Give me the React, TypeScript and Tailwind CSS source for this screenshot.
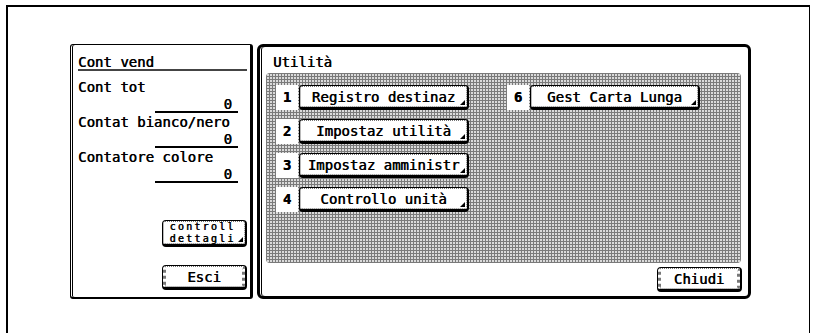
import React from "react";

const mono = { fontFamily: '"DejaVu Sans Mono", "Liberation Mono", monospace' };

function Corner() {
  return (
    <span className="absolute bottom-[2px] right-[2px] w-0 h-0 border-l-[5px] border-l-transparent border-b-[5px] border-b-black" />
  );
}

function MenuButton(props: { label: string; className?: string; arrow?: boolean; heavy?: boolean; children?: React.ReactNode }) {
  return (
    <div
      className={`relative bg-white border border-black border-b-[3px] border-r-[2px] rounded-[4px] ${props.className ?? ""}`}
    >
      <div
        className={`h-full border border-dotted border-[#777] rounded-[2px] flex items-center justify-center ${
          props.heavy ? "border-x-[3px]" : ""
        }`}
      >
        {props.children ?? <span className="text-[14px] leading-none">{props.label}</span>}
      </div>
      {props.arrow && <Corner />}
    </div>
  );
}

function Counter(props: { label: string; value: string }) {
  return (
    <div className="flex flex-col mb-[1px]">
      <div className="h-[17px] leading-[17px]">{props.label}</div>
      <div className="ml-[77px] w-[83px] h-[17px] leading-[16px] border-b-2 border-black text-right pr-[6px]">
        {props.value}
      </div>
    </div>
  );
}

function Row(props: { n: string; label: string }) {
  return (
    <div className="flex h-[25px]">
      <div className="w-[22px] h-[25px] bg-white flex items-center justify-center font-bold text-[14px]">{props.n}</div>
      <MenuButton label={props.label} arrow className="ml-[1px] w-[170px] h-[25px]" />
    </div>
  );
}

export default function App() {
  return (
    <div
      className="w-[815px] h-[333px] overflow-hidden bg-white text-black [text-shadow:0.5px_0_0_#000]"
      style={mono}
    >
      <div className="ml-[6px] mt-[5px] w-[804px] h-[345px] border-2 border-black border-r">
        <div className="flex pl-[62px] pt-[37px]">
          {/* left panel */}
          <div className="w-[183px] h-[255px] border border-black border-r-[3px] border-b-[2px] rounded-[3px] shadow-[inset_1px_0_0_#fff,inset_2px_0_0_#000] flex flex-col text-[14px] pl-[7px] pr-[3px]">
            <div className="mt-[9px] h-[17px] leading-[16px] border-b-2 border-[#444]">Cont vend</div>
            <div className="mt-[8px]">
              <Counter label="Cont tot" value="0" />
              <Counter label="Contat bianco/nero" value="0" />
              <Counter label="Contatore colore" value="0" />
            </div>
            <div className="mt-auto flex flex-col items-end gap-[18px] mb-[7px]">
              <MenuButton label="" arrow className="w-[85px] h-[27px]">
                <span className="block text-[10px] leading-[11.5px] tracking-[2.2px] pr-[3px]">
                  controll
                  <br />
                  dettagli
                </span>
              </MenuButton>
              <MenuButton label="Esci" heavy className="w-[85px] h-[25px]" />
            </div>
          </div>

          {/* right panel */}
          <div className="ml-[4px] w-[494px] h-[255px] border-[3px] border-black rounded-[6px] shadow-[inset_1px_0_0_#fff,inset_2px_0_0_#000] flex flex-col">
            <div className="pl-[13px] pt-[7px] h-[26px] leading-[16px] text-[14px]">Utilità</div>
            <div className="ml-[6px] w-[475px] h-[190px] rounded-[4px] bg-[#dadada] bg-[linear-gradient(90deg,#7a7a7a_1px,transparent_1px),linear-gradient(#7a7a7a_1px,transparent_1px)] bg-size-[3px_3px] pl-[10px] pt-[12px] flex gap-[38px]">
              <div className="flex flex-col gap-[9px]">
                <Row n="1" label="Registro destinaz" />
                <Row n="2" label="Impostaz utilità" />
                <Row n="3" label="Impostaz amministr" />
                <Row n="4" label="Controllo unità" />
              </div>
              <div className="flex flex-col gap-[9px]">
                <Row n="6" label="Gest Carta Lunga" />
              </div>
            </div>
            <div className="flex justify-end mt-[4px] pr-[6px]">
              <MenuButton label="Chiudi" heavy className="w-[85px] h-[25px]" />
            </div>
          </div>
        </div>
      </div>
    </div>
  );
}
